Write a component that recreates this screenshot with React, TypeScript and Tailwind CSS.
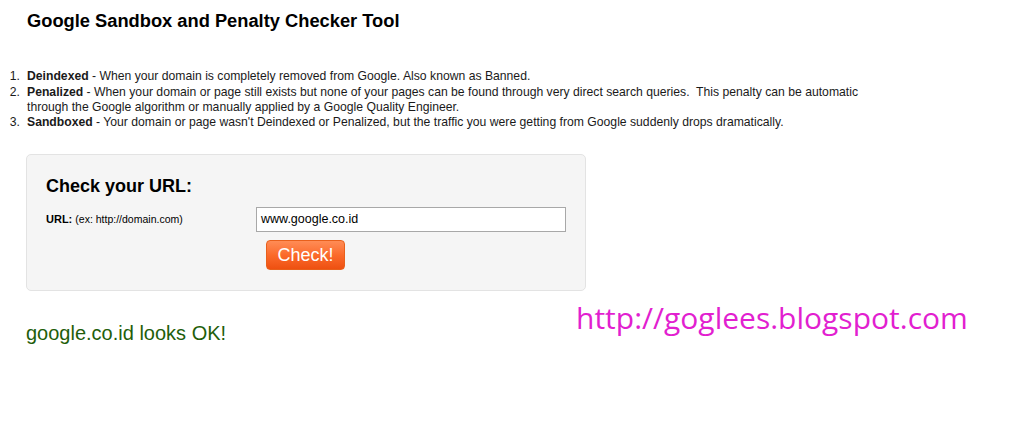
import React from "react";

const items: { term: string; text: string }[] = [
  { term: "Deindexed", text: " - When your domain is completely removed from Google. Also known as Banned." },
  {
    term: "Penalized",
    text: " - When your domain or page still exists but none of your pages can be found through very direct search queries.\u00a0 This penalty can be automatic through the Google algorithm or manually applied by a Google Quality Engineer.",
  },
  { term: "Sandboxed", text: " - Your domain or page wasn't Deindexed or Penalized, but the traffic you were getting from Google suddenly drops dramatically." },
];

export default function App() {
  return (
    <div className="relative w-[1024px] h-[438px] bg-white text-[#111] overflow-hidden" style={{ fontFamily: '"Liberation Sans", Arial, sans-serif' }}>
      <h1 className="ml-[27px] pt-[11px] text-[18.3px] leading-[20px] font-bold text-black">
        Google Sandbox and Penalty Checker Tool
      </h1>
      <ol className="mt-[38px] text-[12.2px] leading-[15px] text-[#1a1a1a] w-[870px]">
        {items.map((it, i) => (
          <li key={it.term} className={`flex ${i === 1 ? "mt-[1px]" : ""}`}>
            <span className="w-[20px] shrink-0 text-right">{i + 1}.</span>
            <span className="ml-[7px]">
              <b>{it.term}</b>
              {it.text}
            </span>
          </li>
        ))}
      </ol>
      <div className="mt-[24px] ml-[26px] w-[560px] h-[137px] bg-[#f5f5f5] border border-[#e3e3e3] rounded-[5px] pl-[19px] pt-[21px]">
        <h2 className="text-[18px] leading-[20px] font-bold text-black">Check your URL:</h2>
        <div className="flex mt-[11px]">
          <div className="w-[210px] pt-[6px] text-[11px] leading-[13px] text-black">
            <b>URL:</b> <span className="text-[10.5px]">(ex: http://domain.com)</span>
          </div>
          <div className="flex flex-col">
            <div className="w-[310px] h-[25px] border border-[#a8a8a8] bg-white px-[4px] text-[12.5px] leading-[23px] text-black">
              www.google.co.id
            </div>
            <button className="mt-[8px] ml-[10px] w-[79px] h-[30px] rounded-[4px] border border-[#e8601c] bg-gradient-to-b from-[#ff8c55] via-[#fb6a2a] to-[#ee5010] text-white text-[18px] leading-[28px] text-center">
              Check!
            </button>
          </div>
        </div>
      </div>
      <div className="mt-[30px] ml-[26px] text-[20px] leading-[24px] text-[#1f5e0a]">
        google.co.id looks OK!
      </div>
      <div className="absolute left-[576px] top-[298px] text-[30px] leading-[40px] text-[#e21fd0]" style={{ fontFamily: '"Open Sans", "Noto Sans", sans-serif' }}>
        http://goglees.blogspot.com
      </div>
    </div>
  );
}
